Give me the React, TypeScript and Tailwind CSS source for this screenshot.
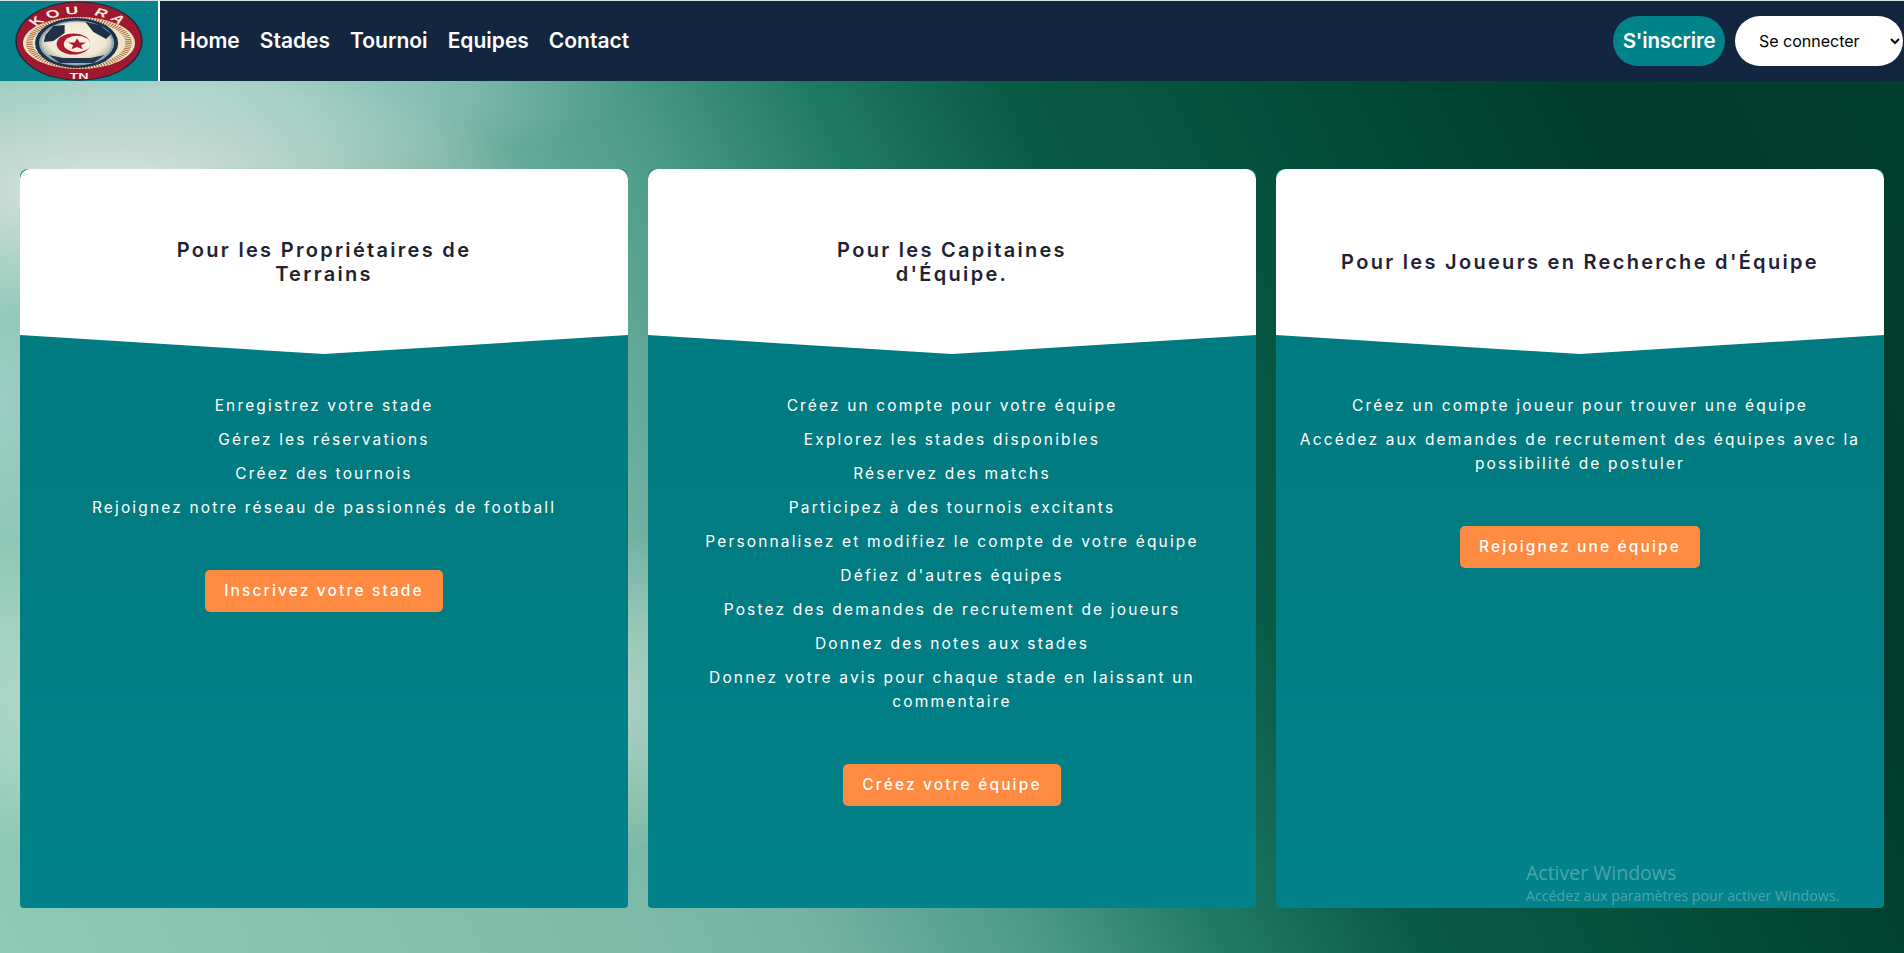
import React from 'react';

/* ─── Data ─── */

const NAV_LINKS = ['Home', 'Stades', 'Tournoi', 'Equipes', 'Contact'];

const CARDS = [
  {
    title: ['Pour les Propriétaires de', 'Terrains'],
    items: [
      'Enregistrez votre stade',
      'Gérez les réservations',
      'Créez des tournois',
      'Rejoignez notre réseau de passionnés de football',
    ],
    cta: 'Inscrivez votre stade',
  },
  {
    title: ['Pour les Capitaines', "d'Équipe."],
    items: [
      'Créez un compte pour votre équipe',
      'Explorez les stades disponibles',
      'Réservez des matchs',
      'Participez à des tournois excitants',
      'Personnalisez et modifiez le compte de votre équipe',
      "Défiez d'autres équipes",
      'Postez des demandes de recrutement de joueurs',
      'Donnez des notes aux stades',
      'Donnez votre avis pour chaque stade en laissant un commentaire',
    ],
    cta: 'Créez votre équipe',
  },
  {
    title: ["Pour les Joueurs en Recherche d'Équipe"],
    items: [
      'Créez un compte joueur pour trouver une équipe',
      'Accédez aux demandes de recrutement des équipes avec la possibilité de postuler',
    ],
    cta: 'Rejoignez une équipe',
  },
];

/* ─── Logo ─── */

function Logo() {
  return (
    <svg viewBox="0 0 80 80" preserveAspectRatio="none" className="h-[80px] w-[128px]">
      <defs>
        <path id="logo-arc" d="M 7 44 A 33 31 0 0 1 73 44" />
        <radialGradient id="logo-ball" cx="50%" cy="42%" r="58%">
          <stop offset="0%" stopColor="#fbf6e6" />
          <stop offset="72%" stopColor="#efe7d2" />
          <stop offset="100%" stopColor="#a3aca8" />
        </radialGradient>
      </defs>
      <circle cx="40" cy="40" r="39.8" fill="#1d2a3a" />
      <circle cx="40" cy="40" r="38.8" fill="#a0182f" />
      {/* laurel band */}
      <ellipse cx="40" cy="42" rx="35" ry="26" fill="#efe2c6" />
      <ellipse cx="40" cy="42" rx="31" ry="24" fill="none" stroke="#a9622f" strokeWidth="4" strokeDasharray="0.8 1" />
      {/* ball */}
      <ellipse cx="38.5" cy="42" rx="26" ry="25" fill="#1c3350" />
      <ellipse cx="38.5" cy="42" rx="23.5" ry="22.5" fill="#93a6aa" />
      <ellipse cx="38.5" cy="42" rx="22" ry="21" fill="url(#logo-ball)" />
      <path d="M 19 34 L 24 25 L 31 24 L 31 32 L 24 40 L 18 41 Z" fill="#1d3048" />
      <path d="M 44 21 L 53 24 L 60 33 L 57 38 L 49 31 Z" fill="#1d3048" />
      <path d="M 21 54 L 28 62 L 49 62 L 56 54 L 47 57 L 30 57 Z" fill="#22364f" />
      {/* crescent and star */}
      <circle cx="36.5" cy="43" r="10.5" fill="#b3172e" />
      <circle cx="38.8" cy="43" r="8.3" fill="#f7f1df" />
      <polygon
        points="38.8,37.4 40.4,41.4 44.4,41.6 41.3,44.2 42.3,48.2 38.8,46 35.3,48.2 36.3,44.2 33.2,41.6 37.2,41.4"
        fill="#b3172e"
      />
      <text
        fontFamily="'Liberation Sans', sans-serif"
        fontWeight="700"
        fontSize="11"
        letterSpacing="3"
        fill="#f6ecdc"
      >
        <textPath href="#logo-arc" startOffset="50%" textAnchor="middle">
          KOU RA
        </textPath>
      </text>
      <text
        x="40"
        y="78"
        textAnchor="middle"
        fontFamily="'Liberation Sans', sans-serif"
        fontWeight="700"
        fontSize="9"
        fill="#f6ecdc"
      >
        TN
      </text>
    </svg>
  );
}

/* ─── Navbar ─── */

function Navbar() {
  return (
    <nav className="flex h-[81px] shrink-0 items-center border-t border-[#d8e4e6] bg-[#13263f]">
      <div className="flex h-full w-[160px] shrink-0 items-center border-r-2 border-white bg-[#07828a] pl-[15px]">
        <Logo />
      </div>
      <ul className="ml-[20px] flex items-center gap-[20px] text-[21px] leading-[30px] font-semibold text-white">
        {NAV_LINKS.map((link) => (
          <li key={link}>{link}</li>
        ))}
      </ul>
      <div className="ml-auto flex items-center gap-[10px] pr-px">
        <button className="h-[50px] w-[112px] rounded-[25px] bg-[#01838a] text-[20.5px] font-semibold tracking-[-0.2px] text-white">
          S'inscrire
        </button>
        <select className="h-[50px] w-[168px] rounded-[25px] bg-white pl-[20px] text-[16px] text-black">
          <option>Se connecter</option>
        </select>
      </div>
    </nav>
  );
}

/* ─── Card ─── */

function Card({ title, items, cta }: (typeof CARDS)[number]) {
  return (
    <section className="flex flex-col items-center overflow-hidden rounded-t-lg rounded-b-[4px] bg-linear-to-b from-[#007b80] via-[#007c82] to-[#02828a] text-center">
      <header className="flex h-[185px] w-full items-center justify-center rounded-t-[10px] bg-white [clip-path:polygon(0_0,100%_0,100%_166px,50%_185px,0_166px)]">
        <h2 className="text-[20px] leading-[24px] font-semibold tracking-[2.3px] text-[#1f2233]">
          {title.map((line) => (
            <span key={line} className="block">
              {line}
            </span>
          ))}
        </h2>
      </header>
      <ul className="px-[20px] pt-[40px] text-[15.5px] leading-[24px] tracking-[2.15px] text-white">
        {items.map((item) => (
          <li key={item} className="mb-[10px]">
            {item}
          </li>
        ))}
      </ul>
      <button className="mt-[40px] h-[42px] rounded-[5px] bg-[#ff8a41] px-[19px] text-[15.5px] font-medium tracking-[2.15px] text-white">
        {cta}
      </button>
    </section>
  );
}

/* ─── Page ─── */

export default function App() {
  return (
    <div className="relative flex h-[953px] flex-col overflow-hidden bg-[radial-gradient(ellipse_420px_130px_at_110px_190px,rgba(226,232,228,0.95),rgba(226,232,228,0)),radial-gradient(ellipse_420px_90px_at_200px_90px,rgba(178,216,214,0.75),rgba(178,216,214,0)),radial-gradient(ellipse_120px_200px_at_0px_400px,rgba(170,214,210,0.6),rgba(170,214,210,0)),radial-gradient(ellipse_680px_175px_at_340px_695px,rgba(212,232,222,0.85),rgba(212,232,222,0)),linear-gradient(64deg,#8ecab6_0%,#80bba8_26%,#74b2a2_35%,#4b9b88_44%,#1f7a64_52%,#0a5c47_60%,#04503c_70%,#003b2b_85%,#023e2e_100%)] font-['Inter','Noto_Sans',sans-serif]">
      <Navbar />
      <main className="grid flex-1 grid-cols-3 gap-[20px] px-[20px] pt-[88px] pb-[45px]">
        {CARDS.map((card) => (
          <Card key={card.cta} {...card} />
        ))}
      </main>
      {/* OS watermark sits over the last card */}
      <div className="absolute top-[860px] left-[1526px] font-['Open_Sans',sans-serif] text-white/30">
        <p className="text-[19.5px] leading-[26px]">Activer Windows</p>
        <p className="text-[14.2px] leading-[20px]">Accédez aux paramètres pour activer Windows.</p>
      </div>
    </div>
  );
}
